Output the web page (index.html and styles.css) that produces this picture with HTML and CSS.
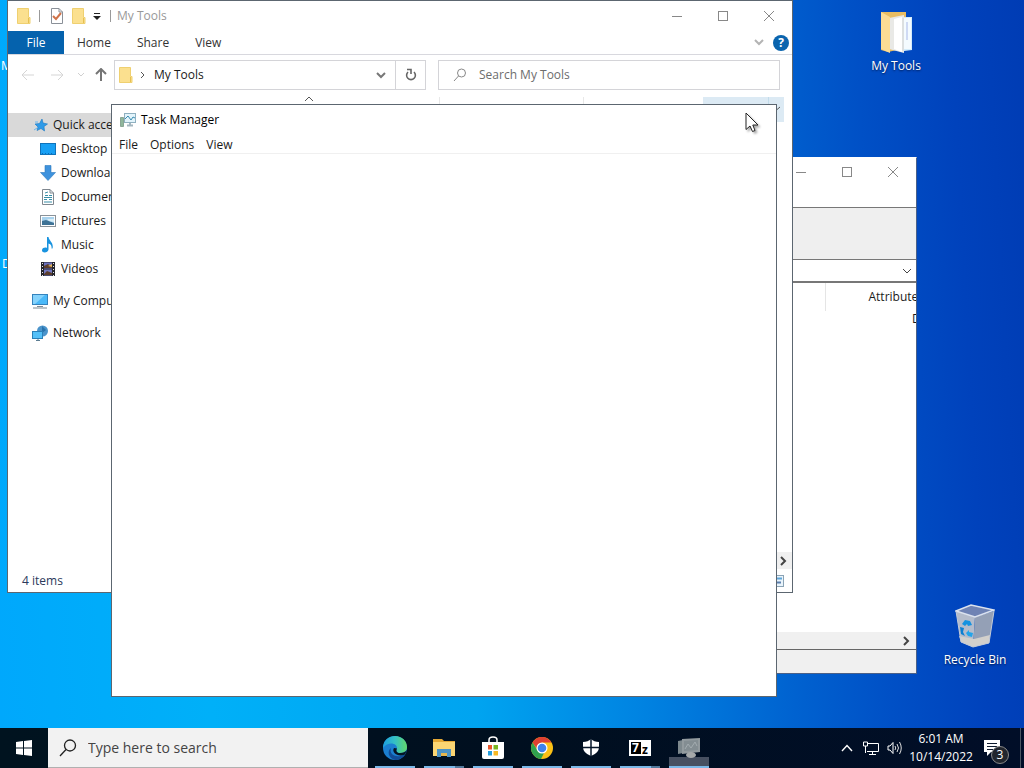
FILE: index.html
```html
<!DOCTYPE html>
<html lang="en">

<head>
    <meta charset="UTF-8">
    <meta name="viewport" content="width=device-width, initial-scale=1.0">
    <link rel="stylesheet" href="styles.css">
    <title>Desktop</title>
</head>

<body>

    <main class="desktop">

        <!-- desktop icons -->
        <div class="shortcut shortcut-one">M</div>
        <div class="shortcut shortcut-two">D</div>
        <button class="desk-icon icon-tools">
            <svg width="32" height="44" viewBox="0 0 32 44">
                <path d="M1 2H26V38L8 42L1 40Z" fill="#e9bd62"/>
                <path d="M18 7H32V40L24 41Z" fill="#d3ecfb"/>
                <path d="M20 8H31V39H24Z" fill="#f4fbff"/>
                <path d="M9 8L24 5V43L9 39Z" fill="#e9e9e6"/>
                <path d="M14 9L22 7V42L14 39Z" fill="#fff"/>
                <path d="M27 12V30" stroke="#a9b8e8"/>
                <path d="M23 8V41" stroke="#cfd6da"/>
                <path d="M1 2L10 7V43L1 39Z" fill="#fcdc94"/>
            </svg>
            <span>My Tools</span>
        </button>
        <button class="desk-icon icon-bin">
            <svg width="40" height="44" viewBox="0 0 40 44">
                <path d="M1 7L20 13L18 43L6 38Z" fill="#b4bccb"/>
                <path d="M20 13L39 7L34 39L18 43Z" fill="#94a0b6"/>
                <path d="M4 32L19 35L35 31L34 39L18 43L6 38Z" fill="#d2d0cc"/>
                <path d="M1 7L16 1L39 6L20 13Z" fill="#6f83b4" stroke="#dbe2ee" stroke-width="1.500"/>
                <path d="M1 7L6 38L18 43L34 39L39 7" fill="none" stroke="#c3cbd8"/>
                <path d="M7 20L10 16L15 17L17 21L13 22L12 20L10 22Z" fill="#1492e0"/>
                <path d="M5 23L9 24L8 28L10 32L6 30Z" fill="#0b7fd2"/>
                <path d="M11 29L14 26V28L18 29L17 33L13 32Z" fill="#22a4ea"/>
            </svg>
            <span>Recycle Bin</span>
        </button>

        <!-- archive manager -->
        <section class="window zip">
            <div class="zip-title">
                <button class="win-btn" aria-label="Minimize"><svg width="12" height="12"><path d="M1 6.500H11" /></svg></button>
                <button class="win-btn" aria-label="Maximize"><svg width="12" height="12"><rect x="1.500" y="1.500" width="9" height="9"/></svg></button>
                <button class="win-btn" aria-label="Close"><svg width="12" height="12"><path d="M1 1L11 11M11 1L1 11"/></svg></button>
            </div>
            <div class="zip-toolbar"></div>
            <div class="zip-address">
                <select aria-label="Path"><option></option></select>
                <svg width="10" height="6"><path d="M1 1L5 5L9 1" fill="none" stroke="#444"/></svg>
            </div>
            <div class="zip-list">
                <table>
                    <thead>
                        <tr><th></th><th class="attr">Attributes</th></tr>
                    </thead>
                    <tbody>
                        <tr><td></td><td class="attr-value">D</td></tr>
                    </tbody>
                </table>
            </div>
            <div class="zip-scroll">
                <svg width="7" height="10"><path d="M1 1L5 5L1 9" fill="none" stroke="#444" stroke-width="2"/></svg>
            </div>
            <div class="zip-status"></div>
        </section>

        <!-- file explorer -->
        <section class="window explorer">
            <div class="titlebar">
                <svg class="folder" width="14" height="16" viewBox="0 0 14 16"><path d="M0.500 0.500H11.500V9.500H13V15.500H0.500Z" fill="#fbe08f" stroke="#efd070"/><path d="M11.500 10V15" stroke="#e6c052"/></svg>
                <i class="sep"></i>
                <svg class="check" width="14" height="16" viewBox="0 0 14 16"><path d="M1.500 0.500H9L12.500 4V15.500H1.500Z" fill="#fff" stroke="#8a9098"/><path d="M9 0.500V4H12.500" fill="none" stroke="#8a9098"/><path d="M3 8L6 11L11 5" fill="none" stroke="#d0734a" stroke-width="2"/></svg>
                <svg class="folder" width="14" height="16" viewBox="0 0 14 16"><path d="M0.500 0.500H11.500V9.500H13V15.500H0.500Z" fill="#fbe08f" stroke="#efd070"/><path d="M11.500 10V15" stroke="#e6c052"/></svg>
                <svg class="quick" width="8" height="8"><path d="M1 1.500H7" stroke="#222"/><path d="M0 4H8L4 8Z" fill="#222"/></svg>
                <i class="sep"></i>
                <h1>My Tools</h1>
                <div class="controls">
                    <button class="win-btn" aria-label="Minimize"><svg width="12" height="12"><path d="M1 6.500H11"/></svg></button>
                    <button class="win-btn" aria-label="Maximize"><svg width="12" height="12"><rect x="1.500" y="1.500" width="9" height="9"/></svg></button>
                    <button class="win-btn" aria-label="Close"><svg width="12" height="12"><path d="M1 1L11 11M11 1L1 11"/></svg></button>
                </div>
            </div>

            <div class="ribbon">
                <button class="tab active">File</button>
                <button class="tab">Home</button>
                <button class="tab">Share</button>
                <button class="tab">View</button>
                <svg class="expand" width="10" height="7"><path d="M1 1L5 5L9 1" fill="none" stroke="#b4b4b4" stroke-width="2"/></svg>
                <button class="help">?</button>
            </div>

            <div class="navigation">
                <div class="arrows">
                    <svg width="14" height="12"><path d="M1 6H13M6 1L1 6L6 11" stroke="#d5d5d5"/></svg>
                    <svg width="14" height="12"><path d="M1 6H13M8 1L13 6L8 11" stroke="#d5d5d5"/></svg>
                    <svg class="recent" width="6" height="4"><path d="M0 0L3 3L6 0" stroke="#d0d0d0"/></svg>
                    <svg width="12" height="14"><path d="M6 1V13M1 6L6 1L11 6" stroke="#757575" stroke-width="2"/></svg>
                </div>
                <div class="address">
                    <svg class="folder" width="14" height="16" viewBox="0 0 14 16"><path d="M0.500 0.500H11.500V9.500H13V15.500H0.500Z" fill="#fbe08f" stroke="#efd070"/><path d="M11.500 10V15" stroke="#e6c052"/></svg>
                    <svg class="crumb" width="5" height="8"><path d="M1 1L4 4L1 7" fill="none" stroke="#555"/></svg>
                    <span>My Tools</span>
                    <svg class="drop" width="10" height="7"><path d="M1 1L5 5L9 1" fill="none" stroke="#777" stroke-width="2"/></svg>
                    <button class="refresh" aria-label="Refresh"><svg width="12" height="14" viewBox="0 0 12 14"><path d="M3 4A4.400 4.400 0 1 0 9 4" fill="none" stroke="#666" stroke-width="1.600"/><path d="M2 1.500H6V6" fill="none" stroke="#666" stroke-width="1.600"/></svg></button>
                </div>
                <div class="find">
                    <svg width="14" height="14" viewBox="0 0 14 14"><circle cx="8.500" cy="5" r="4" fill="none" stroke="#888"/><path d="M5.500 8L1 13" stroke="#888"/></svg>
                    <input type="text" aria-label="Search My Tools" placeholder="Search My Tools">
                </div>
            </div>

            <div class="content">
                <nav class="tree">
                    <a class="selected" href="#"><svg width="16" height="16" viewBox="0 0 16 16"><path d="M10 2L11 6L15.500 7L12 9.500L12.500 14L9 11.500L5 13.500L6 10L3 7L7.500 6.500Z" fill="#2f9be8" stroke="#1677c4" stroke-width=".6"/><path d="M2 13L5 11M3 5L6 5" stroke="#68b8f0"/></svg>Quick access</a>
                    <a class="child" href="#"><svg width="16" height="16" viewBox="0 0 16 16"><rect x=".5" y="2.500" width="15" height="11" fill="#18a0f4" stroke="#1073ba"/><path d="M2 12.500H14" stroke="#0b6fb8" stroke-dasharray="1 2"/></svg>Desktop</a>
                    <a class="child" href="#"><svg width="16" height="16" viewBox="0 0 16 16"><path d="M5 .5H11V7.500H15.500L8 15.500L.5 7.500H5Z" fill="#3e92dd" stroke="#2c78bd" stroke-width=".6"/></svg>Downloads</a>
                    <a class="child" href="#"><svg width="16" height="16" viewBox="0 0 16 16"><path d="M2.500 .5H10L13.500 4V15.500H2.500Z" fill="#fff" stroke="#7f878f"/><path d="M10 .5V4H13.500" fill="none" stroke="#7f878f"/><path d="M5 6.500H8M9 6.500H12M4 8.500H12M4 10.500H7M9 10.500H12M4 13H12M5 4L8 3" stroke="#3b8fa8"/></svg>Documents</a>
                    <a class="child" href="#"><svg width="16" height="16" viewBox="0 0 16 16"><rect x=".5" y="2.500" width="15" height="11" fill="#fff" stroke="#8a9299"/><path d="M2 4H14V12H2Z" fill="#a9d3ee"/><path d="M2 8L6 7L14 10V12H2Z" fill="#3f7396"/><path d="M7 6H14V9L9 8Z" fill="#d8edf7"/></svg>Pictures</a>
                    <a class="child" href="#"><svg width="16" height="16" viewBox="0 0 16 16"><path d="M7 0H8.500C9 4 14 5.500 12.500 11.500H11.500C12 8.500 10.500 7 8.500 6.500V12.500C8 16.500 1.500 16.500 2 13C2.500 10.500 5.500 10 7 11Z" fill="#1993df"/></svg>Music</a>
                    <a class="child" href="#"><svg width="16" height="16" viewBox="0 0 16 16"><path d="M1 1H15V15H1Z" fill="#25252b"/><path d="M4 1.500H12V7.500H4Z" fill="#6a71bd"/><path d="M4 8.500H12V14.500H4Z" fill="#7378c0"/><path d="M4 5L8 3L12 6V7H4ZM4 13L7 10L12 12V14H4Z" fill="#5b3d2c"/><path d="M8 5L12 3V6Z" fill="#e3b45a"/><path d="M2.500 2V15M13.500 2V15" stroke="#e8e8e8" stroke-dasharray="1 2"/></svg>Videos</a>
                    <a class="root" href="#"><svg width="16" height="16" viewBox="0 0 16 16"><rect x=".5" y="1.500" width="15" height="10" fill="#4bb9f8" stroke="#3583bd"/><path d="M1 2H13L3 11H1Z" fill="#86d3fc"/><path d="M5 13.500H11M1 15H15" stroke="#7d8a94"/></svg>My Computer</a>
                    <a class="root" href="#"><svg width="16" height="16" viewBox="0 0 16 16"><circle cx="10.500" cy="6" r="5.500" fill="#4b94cb"/><path d="M10 1L14 5L10 8Z" fill="#2873ad"/><rect x=".5" y="6.500" width="10" height="7" fill="#54c0f8" stroke="#2b80b8"/><path d="M4 15.500H8M6 14V15" stroke="#5c7d92"/></svg>Network</a>
                </nav>
                <div class="files">
                    <div class="columns">
                        <div class="name"><svg width="8" height="5"><path d="M0 4L4 0L8 4" fill="none" stroke="#555"/></svg></div>
                        <div class="date"></div>
                        <div class="type"></div>
                        <div class="size"><svg width="16" height="24" viewBox="0 0 16 24"><path d="M.5 0V24" stroke="#c2dceb"/><path d="M5 10L8.500 13L12 10" fill="none" stroke="#555"/></svg></div>
                    </div>
                    <div class="scroll">
                        <svg width="7" height="10"><path d="M1 1L5 5L1 9" fill="none" stroke="#444" stroke-width="2"/></svg>
                    </div>
                </div>
            </div>

            <div class="status">
                <span>4 items</span>
                <svg width="14" height="12" viewBox="0 0 14 12"><rect x=".5" y=".5" width="13" height="11" fill="#e9f4fb" stroke="#8ba3b5"/><path d="M2 3.500H12" stroke="#5ea5d8" stroke-width="2"/><path d="M6 7.500H11" stroke="#5b7fae" stroke-width="2"/></svg>
            </div>
        </section>

        <!-- task manager -->
        <section class="window taskman">
            <div class="task-title">
                <svg width="16" height="16" viewBox="0 0 16 16">
                    <path d="M.5 5.500H3.500V14.500H.5Z" fill="#8fb79c" stroke="#8aa694"/>
                    <rect x="4.500" y="1.500" width="11" height="9" fill="#e3f4fb" stroke="#8fb0c0"/>
                    <path d="M5 7L8 4L11 8L13 5L15 6" fill="none" stroke="#3a8db2"/>
                    <path d="M7 13.500H13M10 11V13" stroke="#a3b6bf" stroke-width="2"/>
                </svg>
                <h1>Task Manager</h1>
            </div>
            <div class="menu">
                <button>File</button>
                <button>Options</button>
                <button>View</button>
            </div>
        </section>

        <svg class="cursor" width="16" height="22" viewBox="0 0 16 22"><path d="M1 1V17.500L5 14L7.500 19.500L10 18.500L7.800 13H13Z" fill="#fff" stroke="#222"/></svg>
    </main>

    <footer class="taskbar">
        <button class="start" aria-label="Start">
            <svg width="16" height="16" viewBox="0 0 16 16"><path d="M0 2L7 1V7.500H0ZM8 1L16 0V7.500H8ZM0 8.500H7V15L0 14ZM8 8.500H16V16L8 15Z" fill="#fff"/></svg>
        </button>
        <div class="search">
            <svg width="18" height="18" viewBox="0 0 18 18"><circle cx="11" cy="6.500" r="5.500" fill="none" stroke="#222" stroke-width="1.300"/><path d="M7 10.500L1 17" stroke="#222" stroke-width="1.300"/></svg>
            <input type="text" aria-label="Search" placeholder="Type here to search">
        </div>
        <div class="apps">
            <button class="app" aria-label="Edge">
                <svg width="24" height="24" viewBox="0 0 24 24">
                    <defs>
                        <linearGradient id="edge-top" x1="0" y1="0" x2="1" y2="0"><stop offset="0" stop-color="#1c9fe0"/><stop offset=".5" stop-color="#35c1c4"/><stop offset="1" stop-color="#62d76a"/></linearGradient>
                    </defs>
                    <circle cx="12" cy="12" r="12" fill="#1b7fd0"/>
                    <path d="M0 12C0 4 6 0 12 0C19 0 24 5 24 11C24 15 21 17 17 17C14 17 13 15 14 13C15 7 5 5 0 12Z" fill="url(#edge-top)"/>
                    <path d="M8 12C6 18 12 23 22 18.500C20 22 16 24 12 24C5 22 4 15 8 12Z" fill="#124c97"/>
                    <path d="M14 12.500C12.500 15 14 17 17 17C20 17 22.500 16 24 14L22 18.500C15 22 8 16 11 12Z" fill="#051523"/>
                </svg>
            </button>
            <button class="app grouped" aria-label="File Explorer">
                <svg width="24" height="24" viewBox="0 0 24 24"><path d="M1 3H10L12 5H23V20H1Z" fill="#e5a936"/><path d="M1 6H23V20H1Z" fill="#fbd673"/><path d="M5 13H19V21H15V17H9V21H5Z" fill="#4c93c4"/><path d="M9 17H15V20H9Z" fill="#e6b64c"/></svg>
            </button>
            <button class="app" aria-label="Store">
                <svg width="24" height="24" viewBox="0 0 24 24"><path d="M8 7V4C8 0 16 0 16 4V7" fill="none" stroke="#fff" stroke-width="1.500"/><path d="M1 6H23V21Q23 23 21 23H3Q1 23 1 21Z" fill="#fff"/><path d="M7 9H11V13.500H7Z" fill="#e9582d"/><path d="M12.500 9H17V13.500H12.500Z" fill="#79b624"/><path d="M7 15H11V19.500H7Z" fill="#249fdf"/><path d="M12.500 15H17V19.500H12.500Z" fill="#f7b824"/></svg>
            </button>
            <button class="app" aria-label="Chrome">
                <svg width="24" height="24" viewBox="0 0 24 24"><circle cx="12" cy="12" r="11" fill="#fbc116"/><path d="M2.500 6.500A11 11 0 0 1 21.500 6.500H12L8 14Z" fill="#df4032"/><path d="M2.500 6.500L8 15L15 15L11 23A11 11 0 0 1 2.500 6.500Z" fill="#30a14e"/><circle cx="12" cy="12" r="5.500" fill="#fff"/><circle cx="12" cy="12" r="4.300" fill="#3f82ec"/></svg>
            </button>
            <button class="app" aria-label="Security">
                <svg width="18" height="20" viewBox="0 0 18 20"><path d="M9 1Q12 4 17 4V9Q17 15 9 18Q1 15 1 9V4Q6 4 9 1Z" fill="#fff"/><path d="M9 1V19M1 9.500H17" stroke="#07172a" stroke-width="1.500"/></svg>
            </button>
            <button class="app grouped" aria-label="7-Zip">
                <svg class="seven" width="22" height="16" viewBox="0 0 22 16"><path d="M0 0H22V16H0Z" fill="#fff"/><path d="M2 2H12V14H2Z" fill="#000"/><text x="3" y="12" font-size="12" fill="#fff">7</text><text x="13" y="14" font-size="12" fill="#000">z</text></svg>
            </button>
            <button class="app running" aria-label="Task Manager">
                <svg width="24" height="24" viewBox="0 0 24 24"><path d="M1 5L6 4V17L1 18Z" fill="#7d888d"/><path d="M5 3L23 2V16L5 18Z" fill="#929a9e"/><path d="M7 5L21 4V14L7 15Z" fill="#838d92"/><path d="M8 13L11 8L14 12L18 6L20 10" fill="none" stroke="#a3acb0"/><ellipse cx="14" cy="19" rx="5" ry="3" fill="#a6a9aa"/></svg>
            </button>
        </div>
        <div class="tray">
            <svg width="12" height="8"><path d="M1 7L6 1.500L11 7" fill="none" stroke="#fff" stroke-width="1.400"/></svg>
            <svg class="net" width="16" height="14" viewBox="0 0 16 14"><path d="M4 2.500H15.500V10.500H4M9.500 10.500V13M6 13.500H13M.5 1H4.500V5H.5ZM2.500 5V12" fill="none" stroke="#fff"/></svg>
            <svg width="15" height="14" viewBox="0 0 15 14"><path d="M1 5H3L6 1.500V12.500L3 9H1Z" fill="none" stroke="#fff"/><path d="M8 5Q9.500 7 8 9M10 3Q13 7 10 11M12.500 1Q16 7 12.500 13" fill="none" stroke="#ddd"/></svg>
            <div class="clock"><span>6:01 AM</span><span>10/14/2022</span></div>
            <button class="notices" aria-label="Notifications">
                <svg width="16" height="16" viewBox="0 0 16 16"><path d="M0 0H16V12H7L3 16V12H0Z" fill="#fff"/><path d="M3 3.500H13M3 6.500H13M3 9.500H9" stroke="#101c30"/></svg>
                <span class="badge">3</span>
            </button>
            <i class="peek"></i>
        </div>
    </footer>

</body>

</html>
```

FILE: styles.css
```css
* {
    box-sizing: border-box;
}

body {
    margin: 0;
    height: 100vh;
    display: flex;
    flex-direction: column;
    overflow: hidden;
    font-family: "Open Sans", "Noto Sans", sans-serif;
    font-size: 12px;
    line-height: 16px;
    color: #1a1a1a;
}

button, input, select {
    font: inherit;
    color: inherit;
    border: none;
    background: none;
    padding: 0;
    margin: 0;
}

h1 {
    margin: 0;
    font-size: 12px;
    font-weight: 400;
}

svg {
    display: block;
    flex: none;
}

/* desktop */
.desktop {
    flex: 1;
    position: relative;
    overflow: hidden;
    background: linear-gradient(87deg, #00a8fc 0%, #00b0f8 20%, #00a4f0 45%, #0084e2 60%, #0062d0 75%, #0050c6 84%, #0042bc 93%, #003cb4 100%);
}

.shortcut, .desk-icon {
    position: absolute;
    color: #fff;
}

.shortcut-one {
    left: 1px;
    top: 58px;
}

.shortcut-two {
    left: 2px;
    top: 256px;
}

.desk-icon {
    width: 76px;
    display: flex;
    flex-direction: column;
    align-items: center;
    gap: 4px;
    text-shadow: 0 1px 2px #001a50;
}

.icon-tools {
    right: 90px;
    top: 10px;
}

.icon-bin {
    right: 11px;
    bottom: 60px;
}

/* windows */
.window {
    position: absolute;
    display: flex;
    flex-direction: column;
    background: #fff;
    border: 1px solid #5c6670;
    overflow: hidden;
}

.win-btn {
    width: 46px;
    height: 28px;
    display: flex;
    align-items: center;
    justify-content: center;
}

.win-btn svg {
    fill: none;
    stroke: #888;
}

/* archive manager */
.zip {
    left: 320px;
    top: 157px;
    width: 597px;
    height: 517px;
    border-color: #4a6088;
    border-top-color: #fff;
}

.zip-title {
    height: 49px;
    display: flex;
    justify-content: flex-end;
}

.zip-toolbar {
    height: 53px;
    background: #efefef;
    border-top: 1px solid #777;
    border-bottom: 1px solid #777;
}

.zip-address {
    height: 23px;
    padding-right: 4px;
    display: flex;
    align-items: center;
    border-bottom: 2px solid #777;
}

.zip-address select {
    flex: 1;
    appearance: none;
}

.zip-list {
    flex: 1;
    overflow: hidden;
}

.zip-list table {
    width: 609px;
    table-layout: fixed;
    border-collapse: collapse;
}

.zip-list th {
    height: 28px;
    padding: 0;
    font-weight: 400;
    text-align: left;
}

.zip-list td {
    height: 16px;
    padding: 0;
}

.zip-list .attr {
    width: 105px;
    padding-left: 43px;
    border-left: 1px solid #e5e5e5;
}

.zip-list .attr-value {
    padding-left: 87px;
}

.zip-scroll {
    height: 17px;
    padding-right: 6px;
    display: flex;
    align-items: center;
    justify-content: flex-end;
    background: #f0f0f0;
}

.zip-status {
    height: 24px;
    background: #f0f0f0;
    border-top: 1px solid #666;
}

/* file explorer */
.explorer {
    left: 7px;
    top: 0;
    width: 786px;
    height: 593px;
}

.titlebar {
    height: 30px;
    padding-left: 9px;
    display: flex;
    align-items: center;
}

.titlebar h1 {
    flex: 1;
    margin-left: 6px;
    color: #999;
}

.sep {
    width: 1px;
    height: 12px;
    background: #999;
}

.titlebar .folder + .sep {
    margin: 0 10px 0 8px;
}

.check {
    margin-right: 8px;
}

.quick {
    margin: 0 9px 0 7px;
}

.controls {
    display: flex;
}

.ribbon {
    height: 24px;
    padding-right: 3px;
    display: flex;
    align-items: center;
    border-bottom: 1px solid #d8d8de;
}

.tab {
    height: 23px;
    padding: 0 13px;
    color: #333;
}

.tab.active {
    width: 56px;
    background: #0562ad;
    color: #fff;
}

.expand {
    margin-left: auto;
    margin-right: 9px;
}

.help {
    width: 16px;
    height: 16px;
    border-radius: 50%;
    background: #0a64ae;
    color: #fff;
    font-weight: 700;
    line-height: 16px;
}

.navigation {
    padding: 5px 12px 6px 13px;
    display: flex;
    align-items: center;
}

.arrows {
    width: 93px;
    display: flex;
    align-items: center;
    gap: 15px;
}

.arrows svg {
    fill: none;
}

.arrows .recent {
    margin: 0 -4px 0 -1px;
}

.address, .find {
    height: 30px;
    display: flex;
    align-items: center;
    border: 1px solid #d4d4d8;
}

.address {
    width: 312px;
    padding-left: 4px;
    margin-right: 12px;
}

.crumb {
    margin: 0 9px 0 7px;
}

.drop {
    margin-left: auto;
    margin-right: 9px;
}

.refresh {
    width: 30px;
    height: 28px;
    display: flex;
    align-items: center;
    justify-content: center;
    border-left: 1px solid #d4d4d8;
}

.find {
    flex: 1;
    padding-left: 14px;
    gap: 12px;
}

.find input {
    flex: 1;
    min-width: 0;
}

.find input::placeholder {
    color: #6d6d6d;
    opacity: 1;
}

.content {
    flex: 1;
    display: flex;
}

.tree {
    width: 190px;
    padding-top: 17px;
}

.tree a {
    height: 24px;
    padding-left: 24px;
    display: flex;
    align-items: center;
    gap: 5px;
    color: inherit;
    text-decoration: none;
    white-space: nowrap;
}

.tree .child {
    padding-left: 32px;
}

.tree .root {
    margin-top: 8px;
}

.tree .selected {
    background: #d9d9d9;
}

.files {
    flex: 1;
    display: flex;
    flex-direction: column;
}

.columns {
    height: 26px;
    display: flex;
    padding: 1px 8px 0 0;
}

.name {
    flex: 1;
    padding-left: 107px;
    border-right: 1px solid #e8e8e8;
}

.date {
    width: 144px;
    border-right: 1px solid #e8e8e8;
}

.type {
    width: 119px;
}

.size {
    width: 81px;
    display: flex;
    justify-content: flex-end;
    background: #dceaf4;
}

.scroll {
    height: 17px;
    margin-top: auto;
    padding-right: 5px;
    display: flex;
    align-items: center;
    justify-content: flex-end;
    background: #f0f0f0;
}

.status {
    height: 23px;
    padding: 0 8px 0 14px;
    display: flex;
    align-items: center;
    justify-content: space-between;
    color: #2b3a5c;
}

/* task manager */
.taskman {
    left: 111px;
    top: 104px;
    width: 666px;
    height: 593px;
}

.task-title {
    height: 30px;
    padding-left: 8px;
    display: flex;
    align-items: center;
    gap: 5px;
}

.task-title h1 {
    color: #000;
}

.menu {
    height: 19px;
    padding: 1px 0 0 7px;
    display: flex;
    align-items: center;
    gap: 12px;
    border-bottom: 1px solid #f0f0f0;
}

.cursor {
    position: absolute;
    left: 745px;
    top: 112px;
    filter: drop-shadow(2px 2px 1px #0005);
}

/* taskbar */
.taskbar {
    height: 40px;
    display: flex;
    background: linear-gradient(90deg, #00131f, #000f1f 50%, #010e28);
    color: #fff;
}

.start {
    width: 48px;
    display: flex;
    align-items: center;
    justify-content: center;
}

.search {
    width: 320px;
    padding-left: 11px;
    display: flex;
    align-items: center;
    gap: 11px;
    background: #f2f2f2;
    border-bottom: 1px solid #b0b0b0;
}

.search input {
    flex: 1;
    min-width: 0;
    height: 24px;
    font-size: 14px;
}

.search input::placeholder {
    color: #444;
    opacity: 1;
}

.apps {
    display: flex;
    gap: 9px;
    padding-left: 7px;
}

.app {
    width: 40px;
    padding-top: 2px;
    display: flex;
    align-items: center;
    justify-content: center;
    border-bottom: 2px solid #7ab8e8;
}

.grouped {
    border-image: linear-gradient(90deg, #7ab8e8 75%, #52799c 75%) 2;
}

.seven {
    font-weight: 700;
}

.running {
    background: linear-gradient(transparent 29px, #475061 29px);
}

.tray {
    margin-left: auto;
    display: flex;
    align-items: center;
    gap: 8px;
}

.net {
    margin-left: 2px;
}

.clock {
    width: 62px;
    display: flex;
    flex-direction: column;
    align-items: center;
    line-height: 18px;
}

.notices {
    position: relative;
    margin-left: 4px;
}

.badge {
    position: absolute;
    left: 7px;
    top: 6px;
    width: 18px;
    height: 18px;
    border: 1px solid #888;
    border-radius: 50%;
    background: #22262e;
    line-height: 16px;
}

.peek {
    width: 4px;
    height: 40px;
    margin-left: 12px;
    border-left: 1px solid #4b5663;
}
```
